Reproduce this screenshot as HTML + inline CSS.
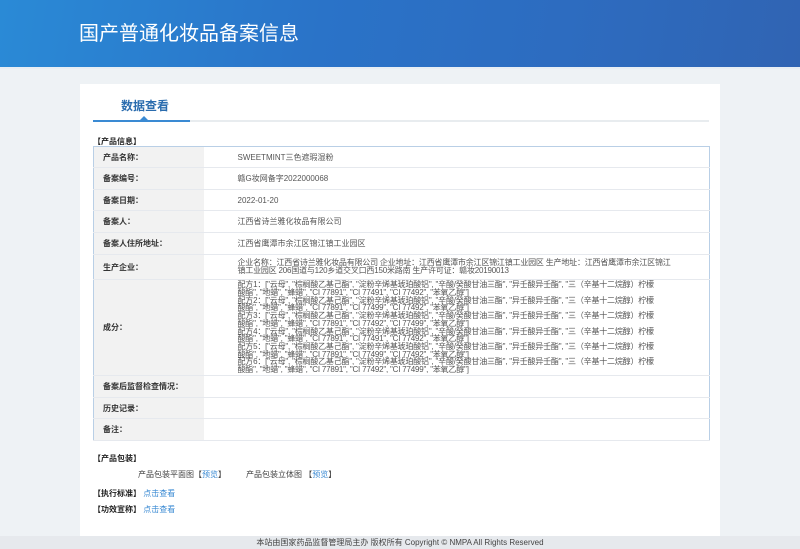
<!DOCTYPE html>
<html><head><meta charset="utf-8"><style>
*{margin:0;padding:0;box-sizing:border-box}
body{width:800px;height:549px;overflow:hidden;background:#eef2f5;font-family:"Liberation Sans","Noto Sans CJK SC",sans-serif;color:#333;position:relative}
.hd{position:absolute;left:0;top:0;width:800px;height:69px;background:linear-gradient(100deg,#2a8ad6 0%,#2a73c8 40%,#2d6cc0 70%,#3064b3 100%);border-bottom:2px solid #e8eef4}
.hd h1{position:absolute;left:79px;top:17px;font-size:20px;font-weight:normal;color:#fff}
.panel{position:absolute;left:80px;top:84px;width:640px;height:452px;background:#fff}
.tab{position:absolute;left:41px;top:13px;font-size:12px;font-weight:bold;color:#2a6cae}
.tl{position:absolute;left:13px;top:36px;width:616px;height:2px;background:#e8ecef}
.tb{position:absolute;left:13px;top:36px;width:97px;height:2px;background:#3a8ad3}
.tri{position:absolute;left:60px;top:32px;width:0;height:0;border-left:4px solid transparent;border-right:4px solid transparent;border-bottom:4px solid #3a8ad3}
.sec{position:absolute;font-size:8px;font-weight:bold;color:#222}
table{position:absolute;left:13px;top:62px;width:617px;border-collapse:collapse;border:1px solid #b9cfe6;font-size:8px}
td{border-bottom:1px solid #e6e9ee;vertical-align:middle}
td.l{width:110px;background:#f2f2f2;font-weight:bold;padding-left:9px;color:#333}
td.v{padding-left:34px;color:#555}
.sm{line-height:7.7px;font-size:8px;letter-spacing:-0.2px}
.lnk{color:#3a8ad3}
.ft{position:absolute;left:0;top:536px;width:800px;height:13px;background:#e6e9ed;font-size:8px;color:#444;text-align:center;line-height:13px}
</style></head><body>
<div class="hd"><h1>国产普通化妆品备案信息</h1></div>
<div class="panel">
<div class="tab">数据查看</div>
<div class="tl"></div><div class="tb"></div><div class="tri"></div>
<div class="sec" style="left:13px;top:52px">【产品信息】</div>
<table>
<tr style="height:21px"><td class="l">产品名称：</td><td class="v">SWEETMINT三色遮瑕湿粉</td></tr>
<tr style="height:22px"><td class="l">备案编号：</td><td class="v">赣G妆网备字2022000068</td></tr>
<tr style="height:21px"><td class="l">备案日期：</td><td class="v">2022-01-20</td></tr>
<tr style="height:22px"><td class="l">备案人：</td><td class="v">江西省诗兰雅化妆品有限公司</td></tr>
<tr style="height:22px"><td class="l">备案人住所地址：</td><td class="v">江西省鹰潭市余江区锦江镇工业园区</td></tr>
<tr style="height:25px"><td class="l">生产企业：</td><td class="v sm" style="padding-right:34px">企业名称：江西省诗兰雅化妆品有限公司 企业地址：江西省鹰潭市余江区锦江镇工业园区 生产地址：江西省鹰潭市余江区锦江镇工业园区 206国道与120乡道交叉口西150米路南 生产许可证：赣妆20190013</td></tr>
<tr style="height:96px"><td class="l">成分：</td><td class="v sm" style="padding-right:50px">配方1：["云母", "棕榈酸乙基己酯", "淀粉辛烯基琥珀酸铝", "辛酸/癸酸甘油三酯", "异壬酸异壬酯", "三（辛基十二烷醇）柠檬酸酯", "地蜡", "蜂蜡", "CI 77891", "CI 77491", "CI 77492", "苯氧乙醇"]<br>配方2：["云母", "棕榈酸乙基己酯", "淀粉辛烯基琥珀酸铝", "辛酸/癸酸甘油三酯", "异壬酸异壬酯", "三（辛基十二烷醇）柠檬酸酯", "地蜡", "蜂蜡", "CI 77891", "CI 77499", "CI 77492", "苯氧乙醇"]<br>配方3：["云母", "棕榈酸乙基己酯", "淀粉辛烯基琥珀酸铝", "辛酸/癸酸甘油三酯", "异壬酸异壬酯", "三（辛基十二烷醇）柠檬酸酯", "地蜡", "蜂蜡", "CI 77891", "CI 77492", "CI 77499", "苯氧乙醇"]<br>配方4：["云母", "棕榈酸乙基己酯", "淀粉辛烯基琥珀酸铝", "辛酸/癸酸甘油三酯", "异壬酸异壬酯", "三（辛基十二烷醇）柠檬酸酯", "地蜡", "蜂蜡", "CI 77891", "CI 77491", "CI 77492", "苯氧乙醇"]<br>配方5：["云母", "棕榈酸乙基己酯", "淀粉辛烯基琥珀酸铝", "辛酸/癸酸甘油三酯", "异壬酸异壬酯", "三（辛基十二烷醇）柠檬酸酯", "地蜡", "蜂蜡", "CI 77891", "CI 77499", "CI 77492", "苯氧乙醇"]<br>配方6：["云母", "棕榈酸乙基己酯", "淀粉辛烯基琥珀酸铝", "辛酸/癸酸甘油三酯", "异壬酸异壬酯", "三（辛基十二烷醇）柠檬酸酯", "地蜡", "蜂蜡", "CI 77891", "CI 77492", "CI 77499", "苯氧乙醇"]</td></tr>
<tr style="height:22px"><td class="l">备案后监督检查情况：</td><td class="v"></td></tr>
<tr style="height:21px"><td class="l">历史记录：</td><td class="v"></td></tr>
<tr style="height:22px"><td class="l">备注：</td><td class="v"></td></tr>
</table>
<div class="sec" style="left:13px;top:369px">【产品包装】</div>
<div style="position:absolute;left:58px;top:385px;font-size:8px;color:#444">产品包装平面图【<span class="lnk">预览</span>】</div>
<div style="position:absolute;left:166px;top:385px;font-size:8px;color:#444">产品包装立体图 【<span class="lnk">预览</span>】</div>
<div class="sec" style="left:13px;top:404px">【执行标准】 <span class="lnk" style="font-weight:normal">点击查看</span></div>
<div class="sec" style="left:13px;top:420px">【功效宣称】 <span class="lnk" style="font-weight:normal">点击查看</span></div>
</div>
<div class="ft">本站由国家药品监督管理局主办 版权所有 Copyright © NMPA All Rights Reserved</div>
</body></html>
